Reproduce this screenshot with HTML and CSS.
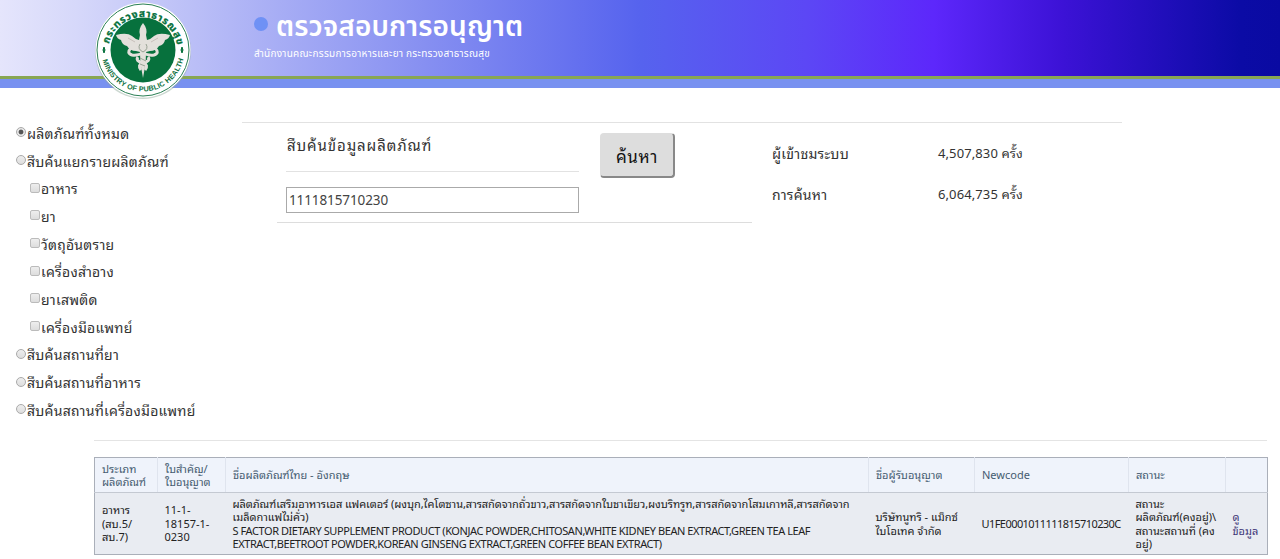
FILE: index.html
```html
<!DOCTYPE html>
<html lang="th">
<head>
<meta charset="utf-8">
<title>ตรวจสอบการอนุญาต</title>
<link rel="stylesheet" href="styles.css">
</head>
<body>
<header class="banner">
  <svg class="seal" viewBox="0 0 100 100" width="100" height="100">
    <defs>
      <path id="arcTop" d="M15 52A35 35 0 0 1 85 52"/>
      <path id="arcBottom" d="M8.500 50A41.500 41.500 0 0 0 91.500 50"/>
    </defs>
    <circle cx="50" cy="51" r="48" fill="#8fa99a" opacity=".45"/>
    <circle cx="50" cy="50" r="47.500" fill="#fff"/>
    <circle cx="50" cy="50" r="46" fill="none" stroke="#2b8055" stroke-width="1"/>
    <circle cx="50" cy="50" r="32.500" fill="#07713d"/>
    <text class="seal-thai"><textPath href="#arcTop" startOffset="8" textLength="95">กระทรวงสาธารณสุข</textPath></text>
    <text class="seal-latin"><textPath href="#arcBottom" startOffset="10" textLength="111">MINISTRY OF PUBLIC HEALTH</textPath></text>
    <path d="M11 47l1 3-1 3-1-3zM89 47l1 3-1 3-1-3z" fill="#07713d" stroke="#07713d"/>
    <path fill="#e3e0db" d="M50 23q5 6 3 12l1 5q4-1 7-4 5-4 16-1-1 4-5 5-1 5-6 6-3 5-9 5l-4 1q0 8-1 15l-2 11-2-11q-1-7-1-15l-4-1q-6 0-9-5-5-1-6-6-4-1-5-5 11-3 16 1 3 3 7 4l1-5q-2-6 3-12z"/>
    <path d="M38 48q-5 5 1 7 5 1 11-2 6 3 11 2 6-2 1-7M45 57q-3 4 5 6 6 2 2 7M55 57q3 4-5 6-6 2-2 7" fill="none" stroke="#e3e0db" stroke-width="3"/>
    <path d="M47 44q-3 5 3 8M53 44q3 5-3 8M47 58l6 3M47 64l5 2" fill="none" stroke="#8f9a8a" stroke-width=".9"/>
    <path d="M42 42l-7-4M58 42l7-4" stroke="#b6a9a4" stroke-width=".6"/>
  </svg>
  <div class="titles">
    <div class="title-row"><span class="dot"></span><h1 class="title">ตรวจสอบการอนุญาต</h1></div>
    <p class="subtitle">สำนักงานคณะกรรมการอาหารและยา กระทรวงสาธารณสุข</p>
  </div>
</header>
<main class="main">
  <nav class="filters">
    <label class="opt"><i class="radio on"></i><span>ผลิตภัณฑ์ทั้งหมด</span></label>
    <label class="opt"><i class="radio"></i><span>สืบค้นแยกรายผลิตภัณฑ์</span></label>
    <label class="opt sub"><i class="box"></i><span>อาหาร</span></label>
    <label class="opt sub"><i class="box"></i><span>ยา</span></label>
    <label class="opt sub"><i class="box"></i><span>วัตถุอันตราย</span></label>
    <label class="opt sub"><i class="box"></i><span>เครื่องสำอาง</span></label>
    <label class="opt sub"><i class="box"></i><span>ยาเสพติด</span></label>
    <label class="opt sub"><i class="box"></i><span>เครื่องมือแพทย์</span></label>
    <label class="opt"><i class="radio"></i><span>สืบค้นสถานที่ยา</span></label>
    <label class="opt"><i class="radio"></i><span>สืบค้นสถานที่อาหาร</span></label>
    <label class="opt"><i class="radio"></i><span>สืบค้นสถานที่เครื่องมือแพทย์</span></label>
  </nav>
  <section class="panel">
    <div class="search">
      <div class="field">
        <div class="field-label">สืบค้นข้อมูลผลิตภัณฑ์</div>
        <input class="query" type="text" value="1111815710230">
      </div>
      <button class="go">ค้นหา</button>
    </div>
    <dl class="stats">
      <dt>ผู้เข้าชมระบบ</dt><dd>4,507,830 ครั้ง</dd>
      <dt>การค้นหา</dt><dd>6,064,735 ครั้ง</dd>
    </dl>
  </section>
</main>
<section class="results">
  <table class="grid">
    <colgroup><col class="c1"><col class="c2"><col class="c3"><col class="c4"><col class="c5"><col class="c6"><col class="c7"></colgroup>
    <thead>
      <tr><th>ประเภท<br>ผลิตภัณฑ์</th><th>ใบสำคัญ/<br>ใบอนุญาต</th><th>ชื่อผลิตภัณฑ์ไทย - อังกฤษ</th><th>ชื่อผู้รับอนุญาต</th><th>Newcode</th><th>สถานะ</th><th></th></tr>
    </thead>
    <tbody>
      <tr>
        <td>อาหาร<br>(สบ.5/<br>สบ.7)</td>
        <td>11-1-<br>18157-1-<br>0230</td>
        <td><span class="th-name">ผลิตภัณฑ์เสริมอาหารเอส แฟคเตอร์ (ผงบุก,ไคโตซาน,สารสกัดจากถั่วขาว,สารสกัดจากใบชาเขียว,ผงบริทรูท,สารสกัดจากโสมเกาหลี,สารสกัดจาก</span><br>เมล็ดกาแฟไม่คั่ว)<br><span class="en">S FACTOR DIETARY SUPPLEMENT PRODUCT (KONJAC POWDER,CHITOSAN,WHITE KIDNEY BEAN EXTRACT,GREEN TEA LEAF</span><br><span class="en">EXTRACT,BEETROOT POWDER,KOREAN GINSENG EXTRACT,GREEN COFFEE BEAN EXTRACT)</span></td>
        <td>บริษัทนูทริ - แม็กซ์<br>ไบโอเทค จำกัด</td>
        <td><span class="code">U1FE0001011111815710230C</span></td>
        <td>สถานะ<br>ผลิตภัณฑ์(คงอยู่)\<br>สถานะสถานที่ (คง<br>อยู่)</td>
        <td><a class="link">ดู<br>ข้อมูล</a></td>
      </tr>
    </tbody>
  </table>
</section>
</body>
</html>
```
FILE: styles.css
```css
* { box-sizing: border-box; }
body {
  margin: 0;
  background: #fff;
  color: #333;
  font-family: "Noto Sans", "Noto Sans Thai Looped", "Noto Looped Thai", "Loma", "Waree", sans-serif;
  font-size: 13px;
  height: 559px;
  overflow: hidden;
}
.banner {
  height: 88px;
  display: flex;
  align-items: flex-start;
  padding-left: 93px;
  background:
    linear-gradient(#88a653, #88a653) 0 76px / 100% 3px no-repeat,
    linear-gradient(#7891f0, #7891f0) 0 79px / 100% 9px no-repeat,
    linear-gradient(90deg, #e5e5fc 0, #d6d8fa 6%, #b2b7f6 18%, #8790f1 33%, #5663ee 50%, #5c47f5 63%, #5d27fb 73%, #3c12d6 83%, #0b0ba5 97%, #0a0aa2 100%);
}
.seal { flex: none; }
.seal-thai { font: bold 10px "Noto Sans Thai", sans-serif; fill: #07713d; stroke: #07713d; stroke-width: .3px; }
.seal-latin { font: bold 7.2px "Liberation Sans", sans-serif; fill: #0d7140; }
.titles { padding: 7px 0 0 61px; color: #fff; white-space: nowrap; }
.title-row { display: flex; gap: 8px; height: 40px; }
.dot { width: 14px; height: 14px; margin-top: 10px; border-radius: 50%; background: #6f91f5; }
.title { margin: 0; font-family: "Noto Sans Thai", "Noto Sans", sans-serif; font-size: 28px; line-height: 42px; font-weight: 600; letter-spacing: .1px; }
.subtitle { margin: 0; font-family: "Noto Sans Thai", "Noto Sans", sans-serif; font-size: 10px; line-height: 14px; letter-spacing: .27px; }
.main { display: flex; height: 352px; padding-top: 31px; }
.filters { width: 242px; padding: 0 0 0 16px; }
.opt { display: flex; align-items: center; height: 27.7px; font-size: 14px; letter-spacing: .25px; white-space: nowrap; }
.opt span { margin-top: -1px; }
.sub { padding-left: 14px; }
.radio, .box {
  width: 10px; height: 10px; flex: none; margin: 0 1px 1px 0;
  border: 1px solid #aaa; background: linear-gradient(#eee, #ddd);
}
.radio { border-radius: 50%; }
.on { background: radial-gradient(circle, #555 0 2px, #e7e7e7 2.8px); }
.box { border-radius: 2px; border-color: #bbb; }
.panel { width: 880px; height: 101px; margin-top: 3px; border-top: 1px solid #e2e2e2; display: flex; }
.search { display: flex; width: 475px; height: 100px; margin-left: 35px; padding-left: 9px; border-bottom: 1px solid #ddd; }
.field { width: 293px; }
.field-label { height: 49px; padding-left: 1px; line-height: 45px; border-bottom: 1px solid #e2e2e2; font-size: 15px; letter-spacing: .9px; white-space: nowrap; }
.query {
  display: block; width: 293px; height: 26px; margin-top: 15px; padding: 0 2px;
  border: 1px solid #aaa; font: 13.5px "Noto Sans", sans-serif; letter-spacing: -.1px; color: #444;
}
.go {
  width: 75px; height: 45px; margin: 10px 0 0 21px; padding: 0;
  border: 1px solid #ddd; border-right: 2px solid #888; border-bottom: 2px solid #888; border-radius: 4px;
  background: #ddd; color: #111; font: 17px "Noto Sans", "Noto Sans Thai Looped", "Loma", "Waree", sans-serif; letter-spacing: .6px;
}
.stats { display: grid; grid-template-columns: 166px 120px; grid-auto-rows: 41px; margin: 10px 0 0 20px; font-size: 13px; line-height: 41px; white-space: nowrap; }
.stats dt { font-size: 14px; letter-spacing: .25px; }
.stats dd { margin: 0; letter-spacing: .1px; }
.results { width: 1173px; margin-left: 94px; border-top: 1px solid #e4e4e4; padding-top: 16px; }
.grid { width: 1173px; height: 98px; table-layout: fixed; border-collapse: collapse; border: 1px solid #aaafb9; font-size: 11px; line-height: 13.5px; }
.c1 { width: 63px; } .c2 { width: 68px; } .c3 { width: 643px; } .c4 { width: 106px; }
.c5 { width: 154px; } .c6 { width: 97px; } .c7 { width: 42px; }
.grid th, .grid td { padding: 0 0 0 7px; text-align: left; white-space: nowrap; }
.grid th { height: 35px; background: #eff3fb; color: #465c71; font-weight: 400; border-left: 1px solid #dfe4ee; border-bottom: 1px solid #c4c9d2; }
.grid th:first-child { border-left-color: #aaafb9; }
.grid td { height: 62px; background: #e9ecf2; color: #222; }
.th-name { letter-spacing: -.06px; }
.en { letter-spacing: -.43px; }
.code { letter-spacing: -.56px; }
.grid .link { color: #3e3678; }
```
